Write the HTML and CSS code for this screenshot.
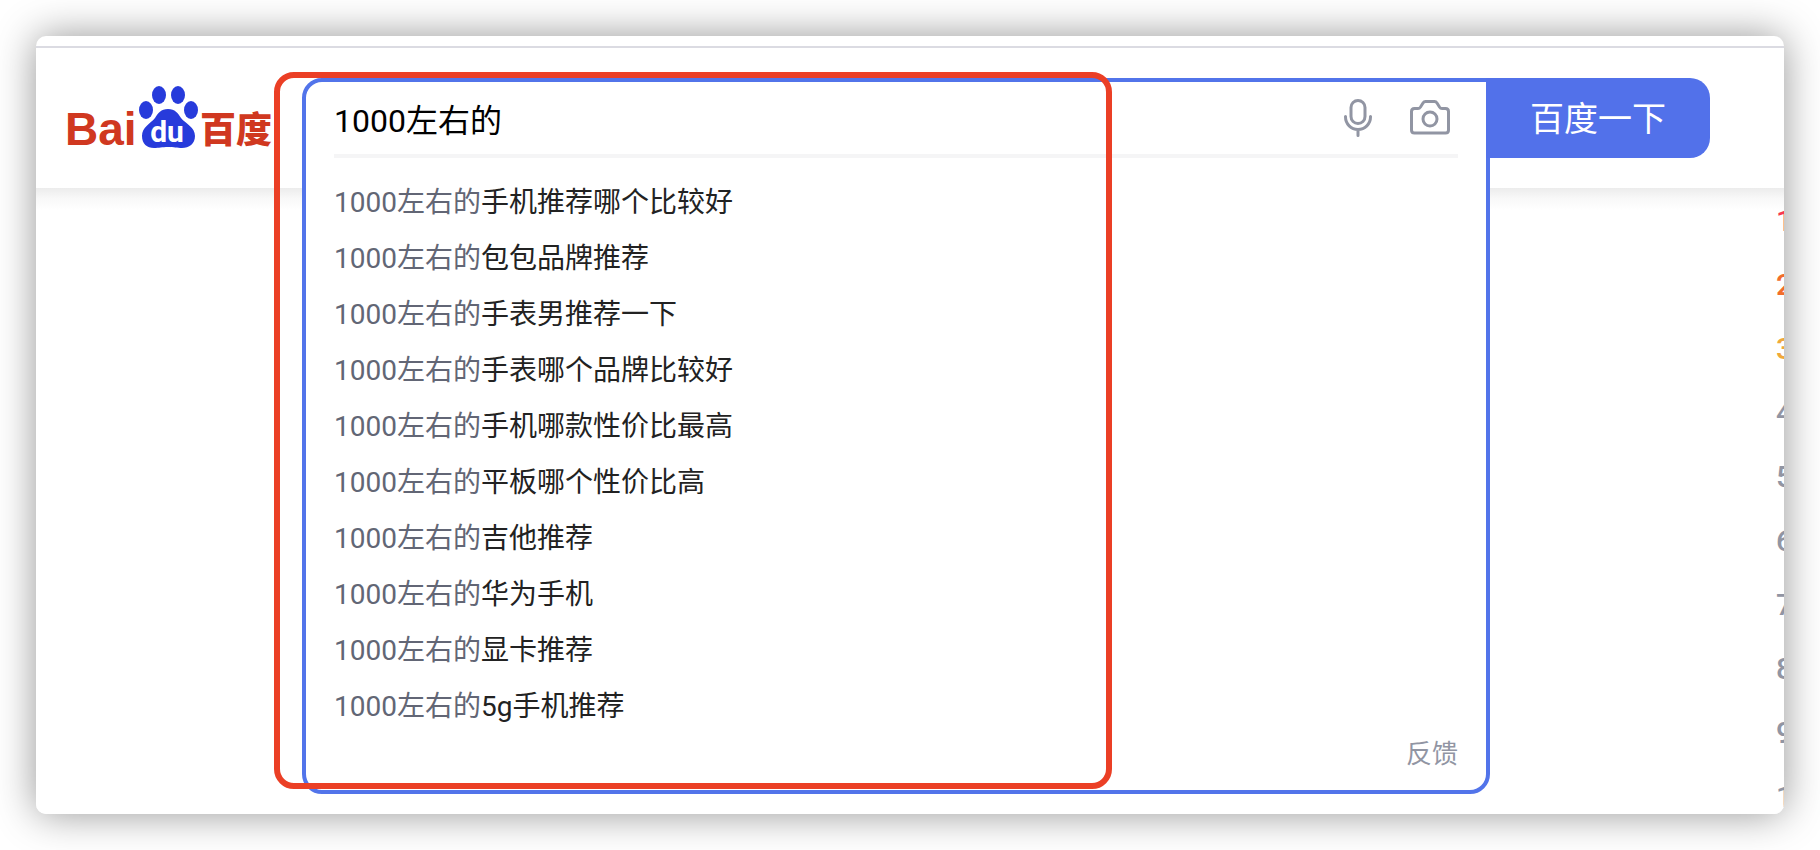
FILE: index.html
```html
<!DOCTYPE html>
<html lang="zh-CN">
<head>
    <meta charset="UTF-8">
    <meta name="viewport" content="width=device-width, initial-scale=1.0">
    <title>百度一下</title>
    <link rel="stylesheet" href="styles.css">
</head>
<body>
    <div class="window">
        <header class="header">
            <a class="logo" href="#">
                <svg viewBox="0 0 206 80" width="206" height="80">
                    <g fill="#d03820">
                        <text class="logo-latin" x="-3" y="67">Bai</text>
                        <text class="logo-cn" x="132" y="65">百度</text>
                    </g>
                    <g fill="#273bdb">
                        <ellipse cx="78" cy="32" rx="7" ry="9" />
                        <ellipse cx="91" cy="17" rx="7" ry="9" />
                        <ellipse cx="110" cy="17" rx="7" ry="9" />
                        <ellipse cx="123" cy="32" rx="7" ry="9" />
                        <path d="M100 31c7 0 10 4 13 9c5 6 14 9 14 18c0 8-6 12-13 12c-5 0-8-1-14-1s-9 1-14 1c-7 0-12-4-12-12c0-9 8-12 13-18c3-5 6-9 13-9z" />
                    </g>
                    <text class="logo-du" x="99" y="64" fill="#fff">du</text>
                </svg>
            </a>
            <form class="search">
                <div class="search-box">
                    <!-- input and suggestions share one bordered panel -->
                    <div class="panel">
                        <div class="input-row">
                            <input type="text" id="kw" class="kw" value="1000左右的" aria-label="搜索" autocomplete="off">
                            <button type="button" class="icon-btn" aria-label="语音">
                                <svg viewBox="0 0 40 40" width="40" height="40">
                                    <rect x="13" y="2.5" width="14" height="23" rx="7" />
                                    <path d="M7.5 18.5v.5a12.5 12.5 0 0 0 25 0v-.5M20 31.5v6" />
                                </svg>
                            </button>
                            <button type="button" class="icon-btn" aria-label="图片">
                                <svg viewBox="0 0 40 40" width="40" height="40">
                                    <path d="M4.500 10.500h3.500q1.500 0 2.500-1.500l2.500-4q1-1.500 2.500-1.500h9q1.500 0 2.500 1.500l2.500 4q1 1.500 2.500 1.500h3.500q3 0 3 3v18.500q0 3-3 3h-31q-3 0-3-3v-18.500q0-3 3-3z" />
                                    <circle cx="20" cy="21" r="7" />
                                </svg>
                            </button>
                        </div>
                        <ul class="suggest">
                            <li><span>1000左右的</span>手机推荐哪个比较好</li>
                            <li><span>1000左右的</span>包包品牌推荐</li>
                            <li><span>1000左右的</span>手表男推荐一下</li>
                            <li><span>1000左右的</span>手表哪个品牌比较好</li>
                            <li><span>1000左右的</span>手机哪款性价比最高</li>
                            <li><span>1000左右的</span>平板哪个性价比高</li>
                            <li><span>1000左右的</span>吉他推荐</li>
                            <li><span>1000左右的</span>华为手机</li>
                            <li><span>1000左右的</span>显卡推荐</li>
                            <li><span>1000左右的</span>5g手机推荐</li>
                        </ul>
                        <a class="feedback" href="#">反馈</a>
                        <div class="marker"></div>
                    </div>
                </div>
                <button type="submit" class="submit">百度一下</button>
            </form>
        </header>
        <main class="main">
            <ol class="rank">
                <li class="first">1</li>
                <li class="second">2</li>
                <li class="third">3</li>
                <li>4</li>
                <li>5</li>
                <li>6</li>
                <li>7</li>
                <li>8</li>
                <li>9</li>
                <li>10</li>
            </ol>
        </main>
    </div>
</body>
</html>
```

FILE: styles.css
```css
* {
    box-sizing: border-box;
}

body {
    margin: 0;
    padding: 36px;
    background: #fff;
    font-family: Roboto, "Liberation Sans", Arial, "Noto Sans CJK SC", sans-serif;
    color: #222;
}

button,
input {
    font-family: inherit;
}

a {
    text-decoration: none;
}

.window {
    height: calc(100vh - 72px);
    padding-top: 10px;
    overflow: hidden;
    background: #fff;
    border-radius: 10px;
    box-shadow: 0 0 40px rgba(0, 0, 0, 0.42);
}

/* Header */
.header {
    position: relative;
    z-index: 1;
    display: flex;
    align-items: flex-start;
    height: 142px;
    padding: 30px 74px 0 32px;
    background: #fff;
    border-top: 2px solid #dbdbe2;
}

.logo {
    flex: none;
    width: 234px;
}

.logo svg {
    display: block;
    overflow: visible;
}

.logo-latin {
    font-family: "Liberation Sans", Arial, sans-serif;
    font-size: 46px;
    font-weight: bold;
}

.logo-cn {
    font-family: "Noto Sans CJK SC", sans-serif;
    font-size: 36px;
    font-weight: 900;
}

.logo-du {
    font-size: 30px;
    font-weight: bold;
    text-anchor: middle;
}

/* Search */
.search {
    display: flex;
    flex: 1;
    height: 80px;
}

.search-box {
    position: relative;
    flex: 1;
}

.panel {
    position: absolute;
    top: 0;
    left: 0;
    right: -4px;
    padding: 0 28px 17px;
    background: #fff;
    border: 4px solid #5274ea;
    border-radius: 20px 0 20px 20px;
}

.input-row {
    display: flex;
    align-items: center;
    gap: 32px;
    height: 76px;
    padding-right: 8px;
    border-bottom: 4px solid #f5f5f6;
}

.kw {
    flex: 1;
    min-width: 0;
    height: 72px;
    padding: 0;
    border: none;
    outline: none;
    background: none;
    font-size: 32px;
    color: #000;
}

.icon-btn {
    padding: 0;
    border: none;
    background: none;
    cursor: pointer;
}

.icon-btn svg {
    display: block;
    fill: none;
    stroke: #9195a3;
    stroke-width: 3;
    stroke-linecap: round;
}

.submit {
    position: relative;
    width: 224px;
    height: 80px;
    padding: 0 0 4px;
    border: none;
    border-radius: 0 20px 20px 0;
    background: #5271ea;
    color: #fff;
    font-size: 34px;
    cursor: pointer;
}

/* Suggestions */
.suggest {
    margin: 0;
    padding: 17px 0 0;
    list-style: none;
    font-size: 28px;
    line-height: 56px;
}

.suggest span {
    color: #626675;
}

.feedback {
    display: block;
    text-align: right;
    font-size: 26px;
    line-height: 38px;
    color: #9195a3;
}

/* Red frame around the suggestions */
.marker {
    position: absolute;
    top: -10px;
    bottom: 1px;
    left: -32px;
    width: 71%;
    border: 6px solid #eb3f25;
    border-radius: 20px;
    pointer-events: none;
}

/* Hot list, cut off by the window edge */
.main {
    display: flex;
    justify-content: flex-end;
    padding-top: 1px;
    /* shade under the header */
    background: linear-gradient(#ececec, #f8f8f8 10px, #fff 22px);
}

.rank {
    width: 8px;
    margin: 0;
    padding: 0;
    list-style: none;
    font-size: 30px;
    font-weight: 500;
    line-height: 64px;
    color: #9195a3;
}

.rank .first {
    color: #f73850;
}

.rank .second {
    color: #f26d2c;
}

.rank .third {
    color: #f0a93a;
}
```
